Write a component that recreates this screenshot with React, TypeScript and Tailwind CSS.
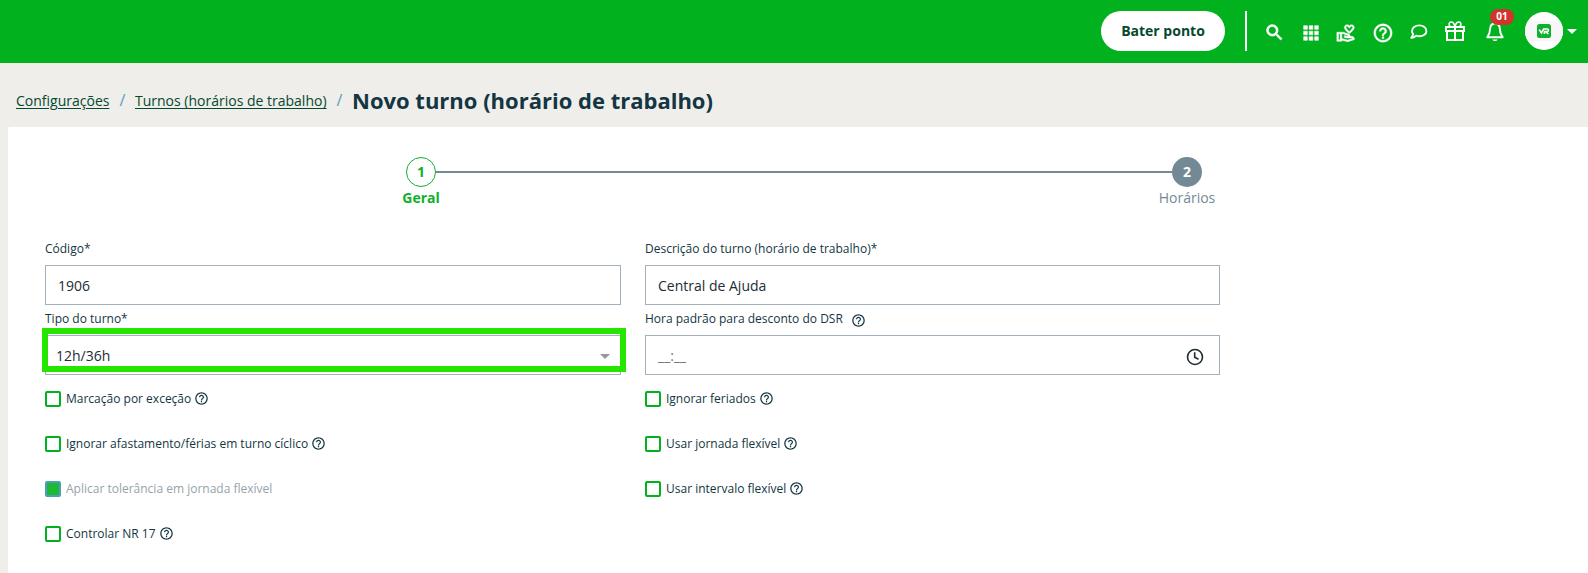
import type { ReactNode } from "react";
import { MdSearch, MdApps, MdHelpOutline, MdOutlineVolunteerActivism } from "react-icons/md";

function HelpIcon({ className = "" }: { className?: string }) {
  return <MdHelpOutline className={`h-[15px] w-[15px] shrink-0 text-[#143642] ${className}`} />;
}

function ChatIcon() {
  return (
    <svg viewBox="0 0 18 16" className="h-4 w-[18px]" fill="none" stroke="white" strokeWidth="1.9" strokeLinejoin="round">
      <path d="M9.3 1.4C13.4 1.4 16.4 3.7 16.4 6.9S13.4 12.3 9.3 12.3C8.2 12.3 7.1 12.1 6.2 11.7C4.8 12.8 3.2 13.7 1.3 13.9C2.3 12.8 3 11.6 3.2 10.2C2.4 9.3 2 8.1 2 6.9C2 3.7 5.2 1.4 9.3 1.4Z" />
    </svg>
  );
}

function GiftIcon() {
  return (
    <svg viewBox="0 0 20 20" className="h-5 w-5" fill="none" stroke="white" strokeWidth="2">
      <path d="M1 6H19V10H1ZM2 10V19H18V10M10 5V19" />
      <path d="M10 5.4C9.2 2.6 8 1 6.3 1C3.6 1 3.6 4.2 5.2 5.4M10 5.4C10.8 2.6 12 1 13.7 1C16.4 1 16.4 4.2 14.8 5.4" strokeWidth="1.7" />
    </svg>
  );
}

function BellIcon() {
  return (
    <svg viewBox="0 0 18 20" className="h-5 w-[18px]" fill="none" stroke="white" strokeWidth="1.9">
      <path d="M9 1.5C6 1.5 4.3 3.6 4.1 7C3.9 10.6 3.4 12.8 1.3 15.2H16.7C14.6 12.8 14.1 10.6 13.9 7C13.7 3.6 12 1.5 9 1.5Z" strokeLinejoin="round" />
      <path d="M6.4 17.4H11.6C11 18.5 10.1 19 9 19S7 18.5 6.4 17.4Z" fill="white" stroke="none" />
    </svg>
  );
}

function BrandMark() {
  return (
    <svg viewBox="0 0 14 14" className="h-[14px] w-[14px]">
      <rect width="14" height="14" rx="2.5" fill="#0eb02c" />
      <path d="M2.2 5.6L4.4 9L6.6 5H10.2C12 5 11.8 7.6 10.2 7.6H8.6L11.4 10M7.4 10V7.4" fill="none" stroke="white" strokeWidth="1.6" />
    </svg>
  );
}

function Header() {
  return (
    <header className="flex h-[63px] items-start bg-[#02b11e] pt-[11px] text-white">
      <button className="ml-[1101px] h-10 w-[124px] shrink-0 rounded-full bg-white pb-[2px] text-[14px] font-bold text-[#04492f]">Bater ponto</button>
      <div className="ml-5 h-10 w-0.5 shrink-0 bg-white" />
      <MdSearch stroke="currentColor" strokeWidth="0.9" className="mt-[11px] ml-[17px] h-[21px] w-[21px] shrink-0 [&_[fill=none]]:stroke-none" />
      <MdApps stroke="currentColor" strokeWidth="0.6" className="mt-[11px] ml-[15px] h-[22px] w-[22px] shrink-0 [&_[fill=none]]:stroke-none" />
      <MdOutlineVolunteerActivism stroke="currentColor" strokeWidth="0.5" className="mt-[12px] ml-[14px] h-5 w-5 shrink-0 [&_[fill=none]]:stroke-none" />
      <MdHelpOutline stroke="currentColor" strokeWidth="0.4" className="mt-[11px] ml-[16px] h-[22px] w-[22px] shrink-0 [&_[fill=none]]:stroke-none" />
      <div className="mt-[13px] ml-[16px] shrink-0"><ChatIcon /></div>
      <div className="mt-[10px] ml-[17px] shrink-0"><GiftIcon /></div>
      <div className="relative mt-[11px] ml-[21px] shrink-0">
        <BellIcon />
        <span className="absolute -top-[13px] left-[4px] flex h-4 w-6 items-center justify-center rounded-full bg-[#d0342c] pb-px text-[10px] font-bold">01</span>
      </div>
      <div className="mt-px ml-[21px] flex h-[38px] w-[38px] shrink-0 items-center justify-center overflow-hidden rounded-full bg-white">
        <div className="flex h-5 w-full items-center justify-center bg-[#f7f7f7]"><BrandMark /></div>
      </div>
      <svg viewBox="0 0 10 5" className="mt-[18px] ml-[4px] h-[5px] w-[10px] shrink-0"><path d="M0 0H10L5 5Z" fill="white" /></svg>
    </header>
  );
}

function Breadcrumb() {
  return (
    <nav className="flex h-16 items-center pl-4 text-[14px] text-[#04492f]">
      <a className="mt-[11px] w-[94px] whitespace-nowrap underline underline-offset-2">Configurações</a>
      <span className="mt-[10px] w-[25px] text-center text-[16px] text-[#4fa3c0]">/</span>
      <a className="mt-[11px] w-[192px] whitespace-nowrap underline underline-offset-2">Turnos (horários de trabalho)</a>
      <span className="mt-[10px] w-[25px] text-center text-[16px] text-[#4fa3c0]">/</span>
      <h1 className="mt-[10px] text-[22px] font-bold whitespace-nowrap text-[#143642]">Novo turno (horário de trabalho)</h1>
    </nav>
  );
}

function Stepper() {
  return (
    <div className="ml-[383px] flex w-[826px] items-start pt-[30px] text-[14px] leading-5">
      <div className="flex w-[60px] flex-col items-center font-bold text-[#0eb02c]">
        <div className="flex h-[30px] w-[30px] items-center justify-center rounded-full border border-[#0eb02c]">1</div>
        <span className="mt-px">Geral</span>
      </div>
      <div className="-mx-[15px] mt-[14px] h-0.5 flex-1 bg-[#748996]" />
      <div className="flex w-[60px] flex-col items-center text-[#748996]">
        <div className="flex h-[30px] w-[30px] items-center justify-center rounded-full bg-[#748996] font-bold text-white">2</div>
        <span className="mt-px">Horários</span>
      </div>
    </div>
  );
}

function Field({ label, children, help = false }: { label: string; children: ReactNode; help?: boolean }) {
  return (
    <div className="h-[70px]">
      <div className="flex h-[30px] items-center pb-[3px] text-[12px] text-[#143642]">
        {label}
        {help && <HelpIcon className="mt-[3px] ml-[8px]" />}
      </div>
      <div className="relative flex h-10 items-center border border-[#a3b1bc] pl-3 text-[14px] text-[#212d35]">{children}</div>
    </div>
  );
}

function Check({ label, disabled = false }: { label: string; disabled?: boolean }) {
  return (
    <label className={`flex h-4 items-center text-[12px] ${disabled ? "text-[#96a3aa]" : "text-[#143642]"}`}>
      <span className={`mr-[5px] h-4 w-4 shrink-0 rounded-[2px] border-2 ${disabled ? "border-[#4d9fb9] bg-[#1bb934]" : "border-[#02b11e] bg-white"}`} />
      {label}
      {!disabled && <HelpIcon className="mb-px ml-[3px]" />}
    </label>
  );
}

export default function App() {
  return (
    <div className="h-[573px] w-[1588px] overflow-hidden bg-[#efeeea] font-['Open_Sans',sans-serif]">
      <Header />
      <Breadcrumb />
      <main className="ml-2 h-[446px] rounded-tl-[2px] bg-white">
        <Stepper />
        <div className="mt-[27px] ml-[37px] grid w-[1175px] grid-cols-[576px_575px] gap-x-6">
          <Field label="Código*">1906</Field>
          <Field label="Descrição do turno (horário de trabalho)*">Central de Ajuda</Field>
          <Field label="Tipo do turno*">
            <span className="-ml-[2px]">12h/36h</span>
            <svg viewBox="0 0 10 5" className="mt-[3px] mr-[10px] ml-auto h-[5px] w-[10px]"><path d="M0 0H10L5 5Z" fill="#999" /></svg>
            <div className="absolute -top-2 -left-1 h-11 w-[584px] border-[6px] border-[#26e600]" />
          </Field>
          <Field label="Hora padrão para desconto do DSR" help>
            <span className="text-[#757575]">__:__</span>
            <svg viewBox="0 0 18 18" className="mt-[3px] mr-[15px] ml-auto h-[18px] w-[18px]" fill="none" stroke="#1d2b31" strokeWidth="1.6">
              <circle cx="9" cy="9" r="7.5" />
              <path d="M8.7 4.3V9.3L12.5 11.2" />
            </svg>
          </Field>
        </div>
        <div className="mt-4 ml-[37px] grid w-[1175px] grid-cols-[576px_575px] gap-x-6 gap-y-[29px]">
          <Check label="Marcação por exceção" />
          <Check label="Ignorar feriados" />
          <Check label="Ignorar afastamento/férias em turno cíclico" />
          <Check label="Usar jornada flexível" />
          <Check label="Aplicar tolerância em jornada flexível" disabled />
          <Check label="Usar intervalo flexível" />
          <Check label="Controlar NR 17" />
        </div>
      </main>
    </div>
  );
}
